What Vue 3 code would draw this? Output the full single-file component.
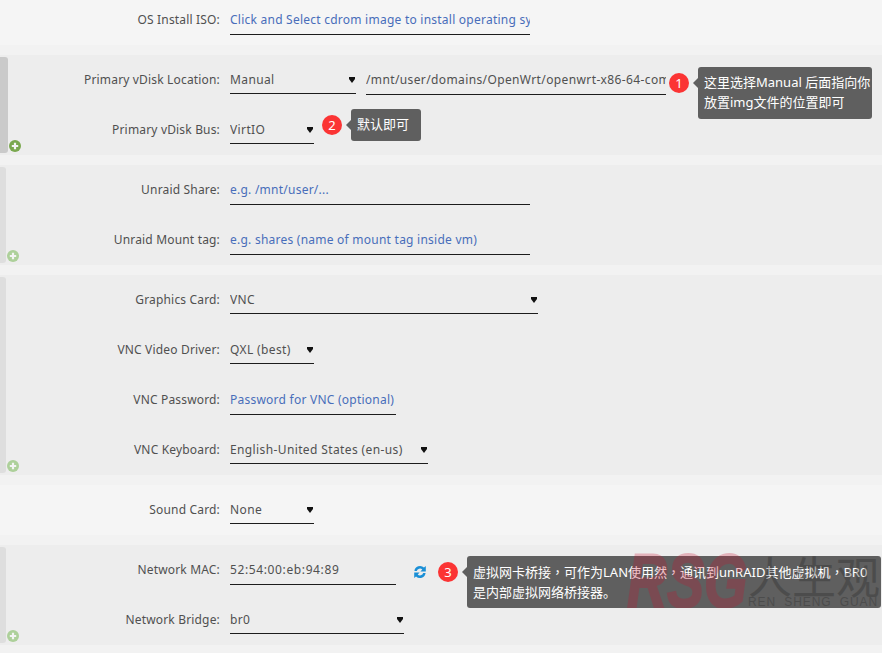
<script setup>
const sections = [
  { tone: 'plain', top: true, rows: [
    { label: 'OS Install ISO:', type: 'input', text: 'Click and Select cdrom image to install operating system', hint: true, w: 300 },
  ] },
  { tone: 'active', rows: [
    { label: 'Primary vDisk Location:', type: 'select', text: 'Manual', w: 126, extra: '/mnt/user/domains/OpenWrt/openwrt-x86-64-combined-squashfs.img', badge: '1', tip: 'one' },
    { label: 'Primary vDisk Bus:', type: 'select', text: 'VirtIO', w: 84, badge: '2', tip: 'two' },
  ] },
  { tone: 'group', rows: [
    { label: 'Unraid Share:', type: 'input', text: 'e.g. /mnt/user/...', hint: true, w: 300 },
    { label: 'Unraid Mount tag:', type: 'input', text: 'e.g. shares (name of mount tag inside vm)', hint: true, w: 300 },
  ] },
  { tone: 'group', rows: [
    { label: 'Graphics Card:', type: 'select', text: 'VNC', w: 308 },
    { label: 'VNC Video Driver:', type: 'select', text: 'QXL (best)', w: 84 },
    { label: 'VNC Password:', type: 'input', text: 'Password for VNC (optional)', hint: true, w: 166 },
    { label: 'VNC Keyboard:', type: 'select', text: 'English-United States (en-us)', w: 198 },
  ] },
  { tone: 'plain', rows: [
    { label: 'Sound Card:', type: 'select', text: 'None', w: 84 },
  ] },
  { tone: 'group', mark: true, rows: [
    { label: 'Network MAC:', type: 'input', text: '52:54:00:eb:94:89', w: 166, mac: true, refresh: true, badge: '3', tip: 'three' },
    { label: 'Network Bridge:', type: 'select', text: 'br0', w: 174 },
  ] },
]
</script>

<template>
  <main class="page">
    <section
      v-for="(section, s) in sections"
      :key="s"
      class="section"
      :class="[section.tone, { top: section.top }]"
    >
      <div v-if="section.tone !== 'plain'" class="rail"></div>
      <svg v-if="section.tone !== 'plain'" class="plus" viewBox="0 0 12 12" width="12" height="12">
        <circle cx="6" cy="6" r="6" fill="currentColor" />
        <path d="M6 2.8v6.4M2.8 6h6.4" stroke="#f4f4f4" stroke-width="2.2" fill="none" />
      </svg>

      <div v-for="row in section.rows" :key="row.label" class="row">
        <div class="label">{{ row.label }}</div>
        <div class="controls">
          <div
            class="field"
            :class="[row.type, { hint: row.hint, mac: row.mac }]"
            :style="{ width: row.w + 'px' }"
          >
            <span class="value">{{ row.text }}</span>
            <i v-if="row.type === 'select'" class="arrow"></i>
          </div>
          <div v-if="row.extra" class="field input path"><span class="value">{{ row.extra }}</span></div>
          <svg v-if="row.refresh" class="refresh" viewBox="0 0 14 14" width="14" height="14">
            <path d="M1.4 6A5.7 5.7 0 0 1 11 2.6L12.8 1V6.4H7.4L9.3 4.5A3.3 3.3 0 0 0 3.8 6Z" fill="#1a8fd6" />
            <path d="M12.6 8A5.7 5.7 0 0 1 3 11.4L1.2 13V7.6H6.6L4.7 9.5A3.3 3.3 0 0 0 10.2 8Z" fill="#1a8fd6" />
          </svg>
          <div v-if="row.badge" class="note" :class="row.tip">
            <b class="badge">{{ row.badge }}</b>
            <div class="tip" :class="row.tip">
              <template v-if="row.tip === 'one'">这里选择Manual 后面指向你<br />放置img文件的位置即可</template>
              <template v-else-if="row.tip === 'two'">默认即可</template>
              <template v-else>虚拟网卡桥接<span class="mid">，</span>可作为LAN使用然<span class="mid">，</span>通讯到unRAID其他虚拟机<span class="mid">，</span>BR0<br />是内部虚拟网络桥接器。</template>
            </div>
          </div>
        </div>
      </div>

      <div v-if="section.mark" class="watermark">
        <span class="rsg"><span class="rsg-text">RSG</span></span>
        <span class="brand">
          <span class="cn">人生观</span>
          <span class="en">REN SHENG GUAN</span>
        </span>
      </div>
    </section>
  </main>
</template>

<style scoped>
.page {
  height: 653px;
  overflow: hidden;
  background: #f2f2f2;
  font-family: "Noto Sans", "Noto Sans CJK SC", sans-serif;
  font-size: 12px;
  color: #505050;
  display: flex;
  flex-direction: column;
  gap: 10px;
}
.section {
  position: relative;
  flex: none;
}
.section.top { margin-top: -5px; }
.section.plain { background: #f5f5f5; }
.section.group, .section.active { background: #ededed; }
.rail {
  position: absolute;
  left: 0;
  top: 2px;
  bottom: 2px;
  width: 6px;
  background: #dedede;
  border-radius: 0 3px 3px 0;
}
.active .rail { width: 8px; background: #cacaca; }
.plus {
  position: absolute;
  left: 7px;
  bottom: 3px;
  color: #add09a;
}
.active .plus { left: 9px; color: #7aa84f; }
.row {
  height: 50px;
  display: flex;
  align-items: flex-start;
}
.label {
  width: 220px;
  flex: none;
  text-align: right;
  line-height: 50px;
  letter-spacing: 0.17px;
}
.controls {
  margin-left: 10px;
  display: flex;
  align-items: flex-start;
  position: relative;
}
.field {
  position: relative;
  box-sizing: border-box;
  height: 39px;
  line-height: 50px;
  overflow: hidden;
  white-space: nowrap;
  letter-spacing: 0.38px;
  border-bottom: 1px solid #1c1c1c;
  flex: none;
}
.field.select { height: 39px; }
.field.input { height: 40px; }
.field.hint { color: #486dba; letter-spacing: 0.24px; }
.field.mac { letter-spacing: 0.62px; }
.path { width: 300px; margin-left: 10px; }
.value { display: block; }
.arrow {
  position: absolute;
  right: 1px;
  top: 22px;
  width: 6px;
  height: 6px;
  background: #111;
  clip-path: polygon(0 0, 100% 0, 100% 35%, 50% 100%, 0 35%);
}
.refresh {
  flex: none;
  margin: 20px 0 0 17px;
}
.note {
  position: relative;
  flex: none;
  margin-top: 18px;
  margin-left: 8px;
}
.note.one { margin-left: 3px; }
.note.two { margin-top: 10px; }
.note.three { margin-top: 17px; margin-left: 11px; }
.badge {
  display: block;
  width: 20px;
  height: 20px;
  border-radius: 50%;
  background: #fb3434;
  color: #fff;
  font-weight: 400;
  font-size: 13px;
  line-height: 20px;
  text-align: center;
}
.tip {
  position: absolute;
  left: 29px;
  top: -6px;
  box-sizing: border-box;
  background: #5f5f5f;
  color: #fff;
  border-radius: 3px;
  padding: 6px;
  font-size: 13px;
  line-height: 20px;
  white-space: nowrap;
  z-index: 1;
}
.tip::before {
  content: "";
  position: absolute;
  left: -5px;
  top: 11px;
  border: 5px solid transparent;
  border-left: 0;
  border-right-color: #5f5f5f;
}
.mid { font-family: "Noto Sans CJK TC", sans-serif; }
.tip.two { padding-top: 5px; height: 32px; width: 70px; }
.tip.one { width: 174px; height: 52px; padding-top: 5px; }
.tip.three { width: 414px; height: 52px; }
.watermark {
  position: absolute;
  left: 627px;
  top: 8px;
  width: 255px;
  height: 55px;
  overflow: hidden;
  display: flex;
  pointer-events: none;
  z-index: 2;
}
.rsg {
  flex: none;
  width: 121px;
  opacity: 0.26;
}
.rsg-text {
  display: block;
  font: italic 700 76px/55px "Liberation Sans", sans-serif;
  color: #c8102e;
  -webkit-text-stroke: 2px #c8102e;
  transform: scaleX(0.73);
  transform-origin: left center;
}
.brand {
  display: flex;
  flex-direction: column;
  opacity: 0.3;
}
.cn {
  font: 400 44px/44px "Noto Sans CJK SC", sans-serif;
  color: #222;
  white-space: nowrap;
}
.en {
  font: 400 12px/11px "Liberation Sans", sans-serif;
  color: #222;
  letter-spacing: 0.9px;
  word-spacing: 4px;
  white-space: nowrap;
}
</style>

<style>
html, body { background: #f2f2f2; }
</style>
